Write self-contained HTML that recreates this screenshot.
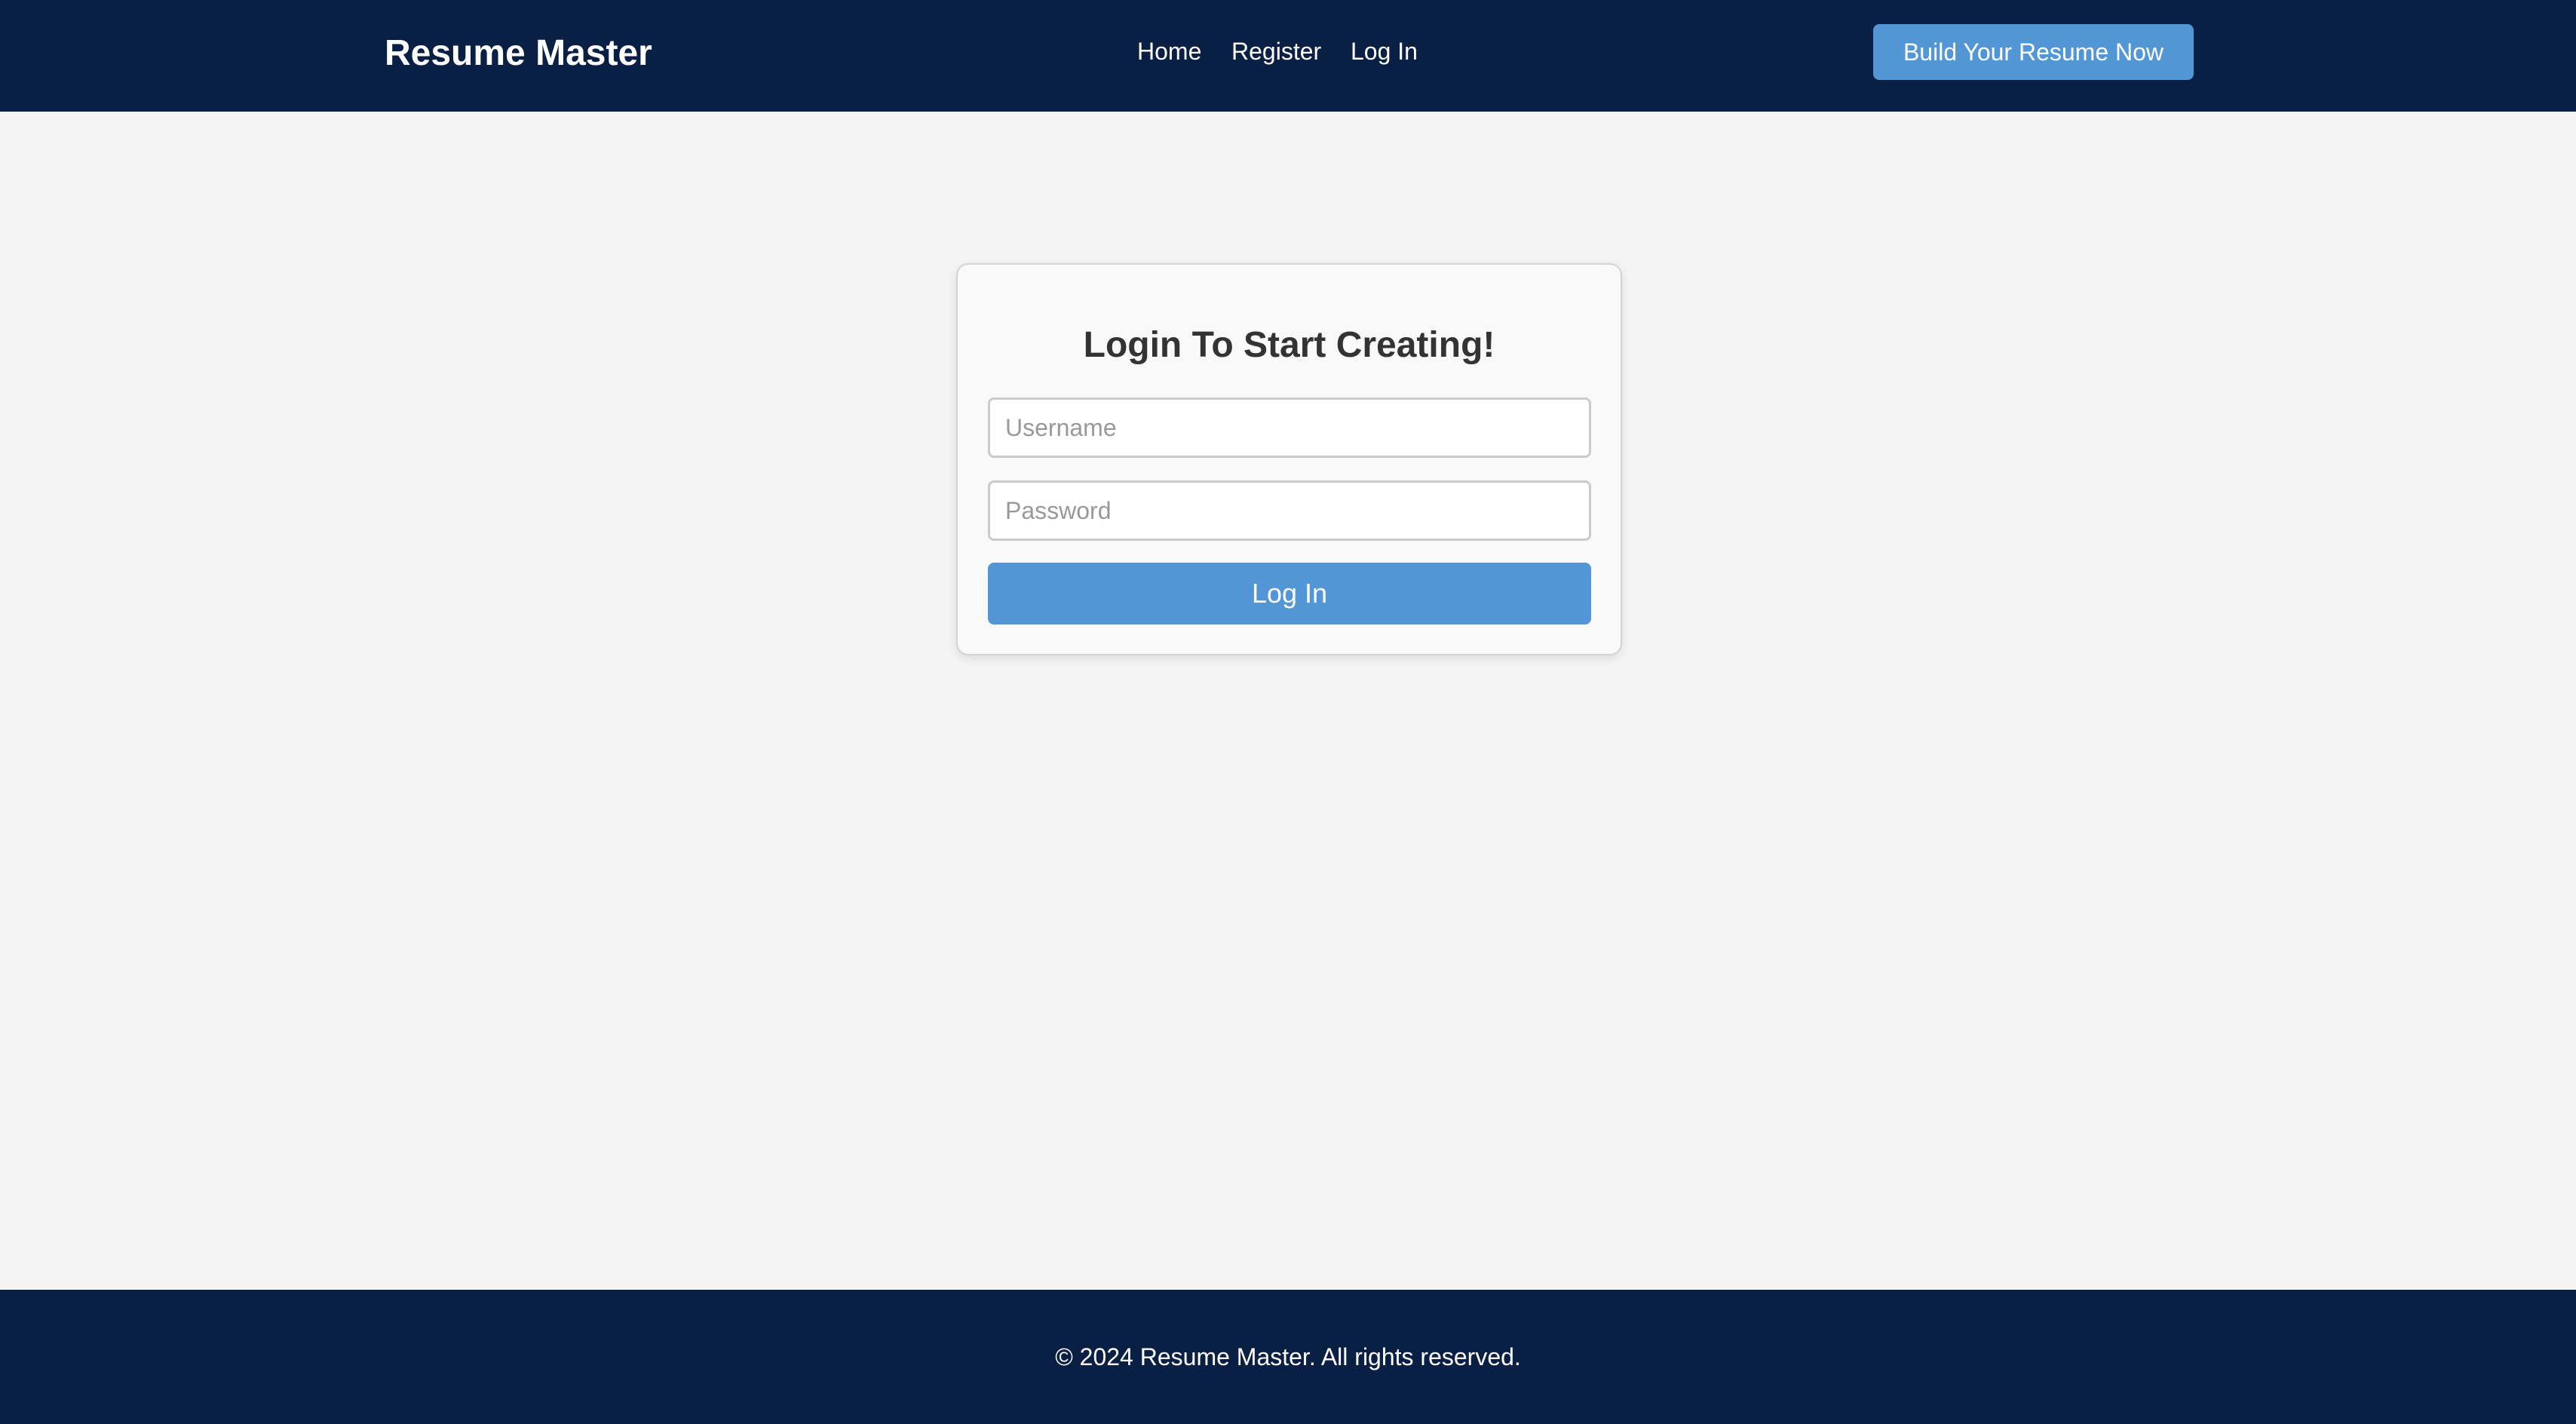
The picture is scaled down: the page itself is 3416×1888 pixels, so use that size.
<!DOCTYPE html>
<html><head><meta charset="utf-8"><style>
*{box-sizing:border-box;margin:0;padding:0}
html,body{width:3416px;height:1888px;overflow:hidden;background:#f4f4f4;font-family:"Liberation Sans",Arial,sans-serif}
header{position:absolute;left:0;top:0;width:3416px;height:148px;background:#0a1f44}
.logo{position:absolute;left:510px;top:43px;font-size:48px;font-weight:bold;color:#fff;line-height:56px}
.nav{position:absolute;top:48px;font-size:32px;color:#fff;line-height:40px}
.cta{position:absolute;left:2484px;top:32px;width:425px;height:74px;background:#5296d5;border-radius:8px;color:#fff;font-size:32px;line-height:74px;text-align:center}
.card{position:absolute;left:1268px;top:349px;width:883px;height:520px;background:#f9f9f9;border:2px solid #d4d4d4;border-radius:16px;box-shadow:0 4px 12px rgba(0,0,0,0.1)}
h1{position:absolute;left:0;width:100%;top:79px;text-align:center;font-size:48px;color:#333;line-height:56px}
.inp{position:absolute;left:40px;width:800px;height:80px;background:#fff;border:3px solid #cbcbcb;border-radius:8px;font-size:32px;color:#999;padding-left:20px;line-height:74px}
.btn{position:absolute;left:40px;top:395px;width:800px;height:82px;background:#5296d5;border-radius:8px;color:#fff;font-size:36px;line-height:82px;text-align:center}
footer{position:absolute;left:0;top:1710px;width:3416px;height:178px;background:#0a1f44;color:#fff;font-size:32px;text-align:center;line-height:178px}
</style></head><body>
<header>
<div class="logo">Resume Master</div>
<div class="nav" style="left:1508px">Home</div>
<div class="nav" style="left:1633px">Register</div>
<div class="nav" style="left:1791px">Log In</div>
<div class="cta">Build Your Resume Now</div>
</header>
<div class="card">
<h1>Login To Start Creating!</h1>
<div class="inp" style="top:176px">Username</div>
<div class="inp" style="top:286px">Password</div>
<div class="btn">Log In</div>
</div>
<footer>© 2024 Resume Master. All rights reserved.</footer>
</body></html>
